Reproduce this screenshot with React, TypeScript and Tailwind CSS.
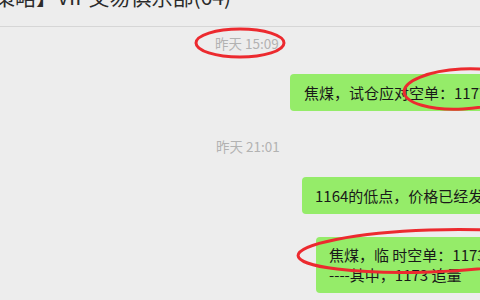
export default function App() {
  return (
    <div
      className="relative h-[300px] w-[480px] overflow-hidden bg-[#ededed] text-[#191919]"
      style={{ fontFamily: '"Noto Sans CJK SC", "Noto Sans", sans-serif' }}
    >
      {/* title bar, cut off at the top */}
      <div className="h-[27px] overflow-hidden border-b border-[#d6d6d6]">
        <div className="-ml-[6px] -mt-[18px] whitespace-nowrap text-[21px] leading-[28px] text-[#2b2b2b]">
          策略】VIP交易俱乐部(64)
        </div>
      </div>

      <div className="flex flex-col whitespace-nowrap">
        <div className="mt-[6px] pl-[215px] text-[13.5px] leading-[20px] text-[#b2b2b2]">昨天 15:09</div>

        <div className="ml-[290px] mt-[21px] w-[260px] rounded-[4px] bg-[#95ec69] py-[8px] pl-[14px] text-[15px] leading-[21px]">
          焦煤，试仓应对空单：1177附近
        </div>

        <div className="mt-[25px] pl-[216px] text-[13.5px] leading-[20px] text-[#b2b2b2]">昨天 21:01</div>

        <div className="ml-[302px] mt-[21px] w-[260px] rounded-[4px] bg-[#95ec69] py-[8px] pl-[13px] text-[15px] leading-[21px]">
          1164的低点，价格已经发生变化
        </div>

        <div className="ml-[316px] mt-[23px] w-[260px] rounded-[4px] bg-[#95ec69] py-[8px] pl-[13px] text-[15px] leading-[20px]">
          <div>焦煤，临 时空单：1173附近</div>
          <div>----其中，1173 追量</div>
        </div>
      </div>

      {/* red hand-drawn circles */}
      <svg className="pointer-events-none absolute inset-0" width="480" height="300" viewBox="0 0 480 300">
        <g fill="none" stroke="#ec2a2f" strokeWidth="3">
          <ellipse cx="240" cy="43" rx="44" ry="14" />
          <ellipse cx="462" cy="89" rx="58" ry="20" transform="rotate(-3 462 89)" />
          <ellipse cx="430" cy="251" rx="132" ry="21" transform="rotate(-2 430 251)" />
        </g>
      </svg>
    </div>
  );
}
